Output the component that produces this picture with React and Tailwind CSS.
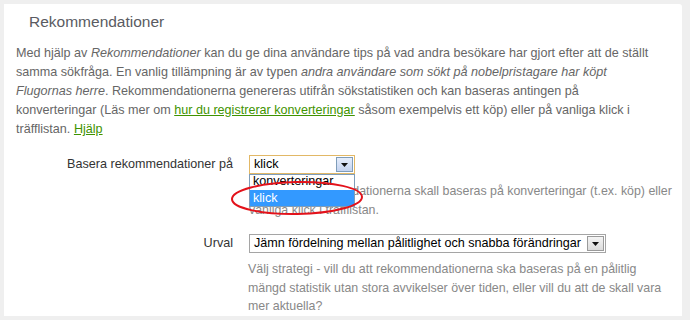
const Arrow = ({ blue }) => (
  <div
    className={
      blue
        ? "flex h-[15px] w-[17px] shrink-0 items-center justify-center border border-[#7f9db9] bg-gradient-to-b from-[#e6eefc] to-[#c4d3ef]"
        : "flex h-[15px] w-[17px] shrink-0 items-center justify-center border border-[#9a9a9a] bg-gradient-to-b from-[#f4f4f4] to-[#dcdcdc]"
    }
  >
    <svg width="7" height="4" viewBox="0 0 7 4">
      <path d="M0 0h7L3.5 4z" fill="#111" />
    </svg>
  </div>
);

export default function App() {
  return (
    <div className="min-h-[320px] bg-[#efefef] pl-[4px] pr-[8px] pt-[18px] font-['Liberation_Sans',Arial,sans-serif]">
      <div className="min-h-[302px] rounded-tr-[3px] bg-white px-[12px]">
        <div className="-mt-[14px] w-[164px] rounded-t-[4px] bg-white pl-[13px] pt-[8px] text-[15.5px] leading-[20px] text-[#5a5b62]">
          Rekommendationer
        </div>

        <p className="mt-[12px] whitespace-nowrap text-[12.6px] leading-[19px] text-[#666]">
          Med hjälp av <i>Rekommendationer</i> kan du ge dina användare tips på vad andra besökare har gjort efter att de ställt
          <br />
          samma sökfråga. En vanlig tillämpning är av typen <i>andra användare som sökt på nobelpristagare har köpt</i>
          <br />
          <i>Flugornas herre</i>. Rekommendationerna genereras utifrån sökstatistiken och kan baseras antingen på
          <br />
          konverteringar (Läs mer om{" "}
          <a className="text-[#3f9300] underline" href="#">hur du registrerar konverteringar</a> såsom exempelvis ett köp) eller på vanliga klick i
          <br />
          träfflistan. <a className="text-[#3f9300] underline" href="#">Hjälp</a>
        </p>

        <div className="mt-[16px] flex items-center gap-[16px] text-[12.6px]">
          <div className="w-[217px] text-right leading-[19px] text-[#333]">Basera rekommendationer på</div>
          <div className="relative">
            <div className="flex h-[19px] w-[106px] items-center justify-between border border-[#e2b866] pl-[4px] pr-[1px] leading-[17px] text-black">
              <span>klick</span>
              <Arrow blue />
            </div>
            <div className="absolute left-0 top-full z-10 w-[106px] border border-[#7f9db9] bg-white text-black">
              <div className="h-[15px] pl-[3px] leading-[13px]">konverteringar</div>
              <div className="h-[16px] bg-[#3399ff] pl-[3px] leading-[16px] text-white">klick</div>
            </div>
            <svg className="absolute left-[-20px] top-[20px] z-20" width="140" height="46" viewBox="0 0 140 46">
              <ellipse cx="68" cy="23" rx="65" ry="16" fill="none" stroke="#e3121b" strokeWidth="2" transform="rotate(-1 68 23)" />
            </svg>
          </div>
        </div>
        <p className="ml-[233px] mt-[8px] whitespace-nowrap text-[12.4px] leading-[18.5px] text-[#888]">
          Välj om rekommendationerna skall baseras på konverteringar (t.ex. köp) eller
          <br />
          vanliga klick i träfflistan.
        </p>

        <div className="mt-[15px] flex items-center gap-[16px] text-[12.6px]">
          <div className="w-[217px] text-right leading-[19px] text-[#333]">Urval</div>
          <div className="flex h-[19px] w-[357px] items-center justify-between border border-[#a5a5a5] pl-[4px] pr-[1px] leading-[17px] text-black">
            <span className="whitespace-nowrap">Jämn fördelning mellan pålitlighet och snabba förändringar</span>
            <Arrow />
          </div>
        </div>
        <p className="ml-[232px] mt-[7px] whitespace-nowrap text-[12.4px] leading-[18.5px] text-[#888]">
          Välj strategi - vill du att rekommendationerna ska baseras på en pålitlig
          <br />
          mängd statistik utan stora avvikelser över tiden, eller vill du att de skall vara
          <br />
          mer aktuella?
        </p>
      </div>
    </div>
  );
}
